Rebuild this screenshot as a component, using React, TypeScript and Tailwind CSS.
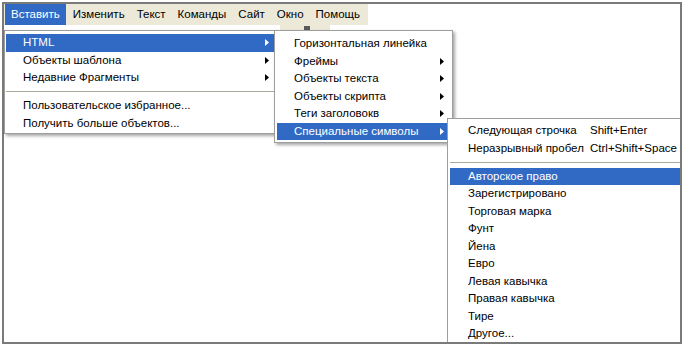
import React from 'react';

type Item = { label?: string; shortcut?: string; sub?: boolean; active?: boolean; sep?: boolean };

const topMenu = ['Вставить', 'Изменить', 'Текст', 'Команды', 'Сайт', 'Окно', 'Помощь'];

const insertMenu: Item[] = [
  { label: 'HTML', sub: true, active: true },
  { label: 'Объекты шаблона', sub: true },
  { label: 'Недавние Фрагменты', sub: true },
  { sep: true },
  { label: 'Пользовательское избранное...' },
  { label: 'Получить больше объектов...' },
];

const htmlMenu: Item[] = [
  { label: 'Горизонтальная линейка' },
  { label: 'Фреймы', sub: true },
  { label: 'Объекты текста', sub: true },
  { label: 'Объекты скрипта', sub: true },
  { label: 'Теги заголовокв', sub: true },
  { label: 'Специальные символы', sub: true, active: true },
];

const charsMenu: Item[] = [
  { label: 'Следующая строчка', shortcut: 'Shift+Enter' },
  { label: 'Неразрывный пробел', shortcut: 'Ctrl+Shift+Space' },
  { sep: true },
  { label: 'Авторское право', active: true },
  { label: 'Зарегистрировано' },
  { label: 'Торговая марка' },
  { label: 'Фунт' },
  { label: 'Йена' },
  { label: 'Евро' },
  { label: 'Левая кавычка' },
  { label: 'Правая кавычка' },
  { label: 'Тире' },
  { label: 'Другое...' },
];

const Arrow = ({ white }: { white?: boolean }) => (
  <svg width="4" height="7" viewBox="0 0 4 7" className="shrink-0">
    <path d="M0 0 L4 3.5 L0 7 Z" fill={white ? '#ffffff' : '#000000'} />
  </svg>
);

function MenuRows({ items, textLeft, arrowRight, shortcutLeft }: { items: Item[]; textLeft: string; arrowRight: string; shortcutLeft?: string }) {
  return (
    <>
      {items.map((it, i) =>
        it.sep ? (
          <div key={i} className="h-[10.5px] flex items-center">
            <div className="w-full h-px bg-[#aca899]" />
          </div>
        ) : (
          <div
            key={i}
            className={`h-[17.5px] flex items-center ${textLeft} ${arrowRight} ${it.active ? 'bg-[#316ac5] text-white' : 'text-black'}`}
          >
            <span className="whitespace-nowrap">{it.label}</span>
            {it.shortcut && <span className={`absolute whitespace-nowrap ${shortcutLeft}`}>{it.shortcut}</span>}
            <span className="flex-1" />
            {it.sub && <Arrow white={it.active} />}
          </div>
        )
      )}
    </>
  );
}

export default function App() {
  return (
    <div className="relative w-[685px] h-[347px] bg-white overflow-hidden font-['Liberation_Sans',Arial,sans-serif] text-[11.5px] leading-none">
      {/* frame + menu bar */}
      <div className="ml-[2px] mt-[2px] w-[680px] h-[342px] border-2 border-[#7a7a7a]">
        <div className="flex h-[21px] w-[364px] bg-[#ece9d8] items-stretch">
          {topMenu.map((m, i) => (
            <div
              key={m}
              className={`flex items-center mr-[2px] ${i === 0 ? 'bg-[#316ac5] text-white ml-px px-[6px]' : 'text-black px-[5px]'}`}
            >
              {m}
            </div>
          ))}
        </div>
        {/* toolbar leftovers under the menu bar */}
        <div className="flex h-[5px]">
          <div className="ml-[276px] w-[50px] bg-[#ece9d8] flex items-end">
            <div className="ml-[24px] w-[6px] h-[4px] bg-[#5a5a5a]" />
          </div>
        </div>
      </div>

      {/* Вставить menu */}
      <div className="absolute left-[4px] top-[30px] w-[273px] bg-white border border-[#9d9d9d] px-px pt-[3px] pb-px shadow-[2px_2px_3px_rgba(0,0,0,0.35)]">
        <MenuRows items={insertMenu} textLeft="pl-[17px]" arrowRight="pr-[6px]" />
      </div>

      {/* HTML submenu */}
      <div className="absolute left-[274px] top-[30px] w-[179px] bg-white border border-[#9d9d9d] px-[2px] pt-[4px] pb-[2px] shadow-[2px_2px_3px_rgba(0,0,0,0.35)]">
        <MenuRows items={htmlMenu} textLeft="pl-[17px]" arrowRight="pr-[6px]" />
      </div>

      {/* Специальные символы submenu */}
      <div className="absolute left-[447px] top-[118px] w-[233px] h-[224px] bg-white border-l border-t border-[#9d9d9d] pl-[2px] pt-[3px]">
        <div className="relative">
          <MenuRows items={charsMenu} textLeft="pl-[18px]" arrowRight="pr-0" shortcutLeft="left-[140px]" />
        </div>
      </div>
    </div>
  );
}
